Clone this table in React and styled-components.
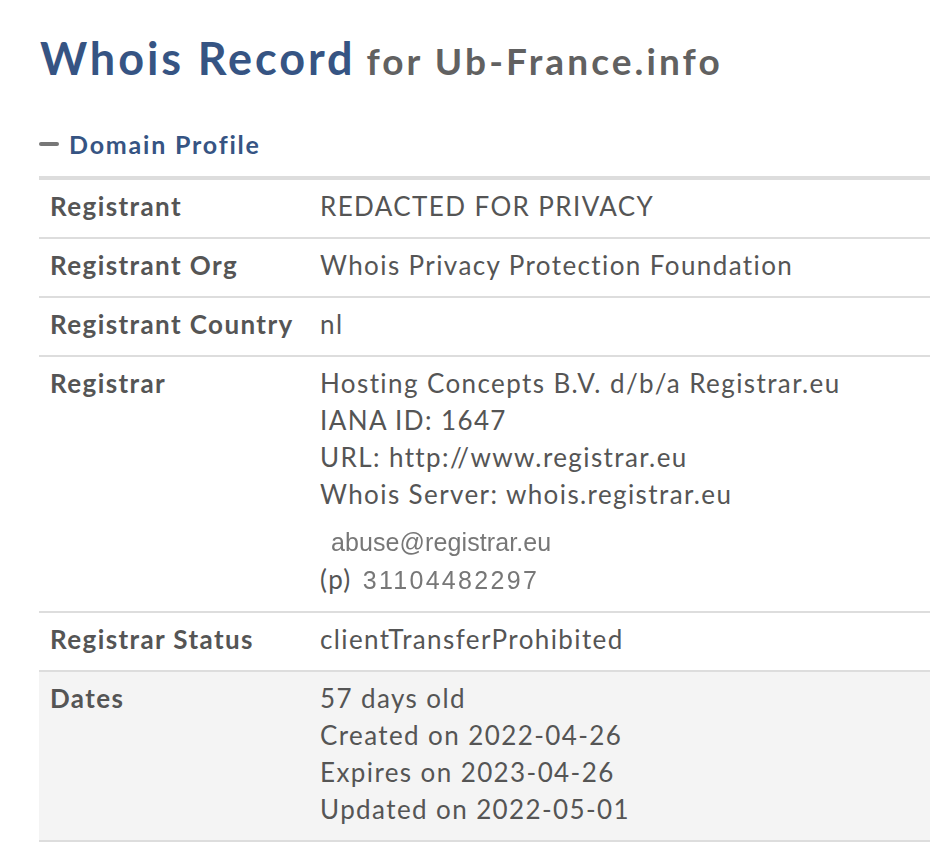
import React from 'react';
import styled, { createGlobalStyle } from 'styled-components';

const GlobalStyle = createGlobalStyle`
  html, body {
    margin: 0;
    padding: 0;
    background: #fff;
    overflow: hidden;
  }
  body {
    font-family: Lato, "Open Sans", sans-serif;
    color: #555;
  }
`

const Page = styled.div`
  padding: 33px 0 0 39px;
  width: 891px;
`

const Title = styled.h1`
  margin: 0 0 0 1px;
  font-size: 45px;
  font-weight: 700;
  line-height: 50px;
  white-space: nowrap;
`

const TitleMain = styled.span`
  color: #365483;
  letter-spacing: 2.9px;
`

const TitleSub = styled.span`
  font-size: 37px;
  color: #616161;
  letter-spacing: 3.1px;
`

const SectionHeader = styled.div`
  display: flex;
  align-items: center;
  gap: 10px;
  margin-top: 42px;
  font-size: 25px;
  font-weight: 700;
  color: #365483;
  letter-spacing: 1.8px;
  line-height: 32px;
`

const Dash = styled.span`
  width: 20px;
  height: 4px;
  border-radius: 2px;
  background: #777;
`

const Table = styled.div`
  margin-top: 16px;
  border-top: 4px solid #ddd;
`

const Row = styled.div`
  display: grid;
  grid-template-columns: 270px 1fr;
  padding: 8px 0 12px 11px;
  border-bottom: 2px solid #ddd;
  background: ${p => (p.$shaded ? '#f4f4f4' : 'transparent')};
  font-size: 26px;
  line-height: 37px;
  letter-spacing: 1.4px;
`

const Label = styled.div`
  font-weight: 700;
  color: #555;
`

const Value = styled.div`
  color: #555;
`

const Line = styled.div``

const Email = styled.div`
  font-family: "Liberation Sans", Arial, sans-serif;
  font-size: 25px;
  letter-spacing: 0.1px;
  color: #777;
  padding-left: 11px;
  margin-top: 11px;
  filter: blur(0.3px);
`

const Phone = styled.div`
  display: flex;
  align-items: baseline;
  gap: 11px;
`

const PhoneNumber = styled.span`
  font-family: "Liberation Sans", Arial, sans-serif;
  font-size: 25px;
  letter-spacing: 2.3px;
  color: #777;
  filter: blur(0.3px);
`

const rows = [
  { label: 'Registrant', lines: ['REDACTED FOR PRIVACY'] },
  { label: 'Registrant Org', lines: ['Whois Privacy Protection Foundation'] },
  { label: 'Registrant Country', lines: ['nl'] },
  {
    label: 'Registrar',
    lines: [
      'Hosting Concepts B.V. d/b/a Registrar.eu',
      'IANA ID: 1647',
      'URL: http://www.registrar.eu',
      'Whois Server: whois.registrar.eu',
    ],
    contact: { email: 'abuse@registrar.eu', phone: '31104482297' },
  },
  { label: 'Registrar Status', lines: ['clientTransferProhibited'] },
  {
    label: 'Dates',
    shaded: true,
    lines: ['57 days old', 'Created on 2022-04-26', 'Expires on 2023-04-26', 'Updated on 2022-05-01'],
  },
];

function App() {
  return (
    <Page>
      <GlobalStyle />
      <Title>
        <TitleMain>Whois Record</TitleMain> <TitleSub>for Ub-France.info</TitleSub>
      </Title>
      <SectionHeader>
        <Dash />
        Domain Profile
      </SectionHeader>
      <Table>
        {rows.map(row => (
          <Row key={row.label} $shaded={row.shaded}>
            <Label>{row.label}</Label>
            <Value>
              {row.lines.map(line => <Line key={line}>{line}</Line>)}
              {row.contact &&
                <>
                  <Email>{row.contact.email}</Email>
                  <Phone>
                    (p)<PhoneNumber>{row.contact.phone}</PhoneNumber>
                  </Phone>
                </>
              }
            </Value>
          </Row>
        ))}
      </Table>
    </Page>
  );
}

export default App;
